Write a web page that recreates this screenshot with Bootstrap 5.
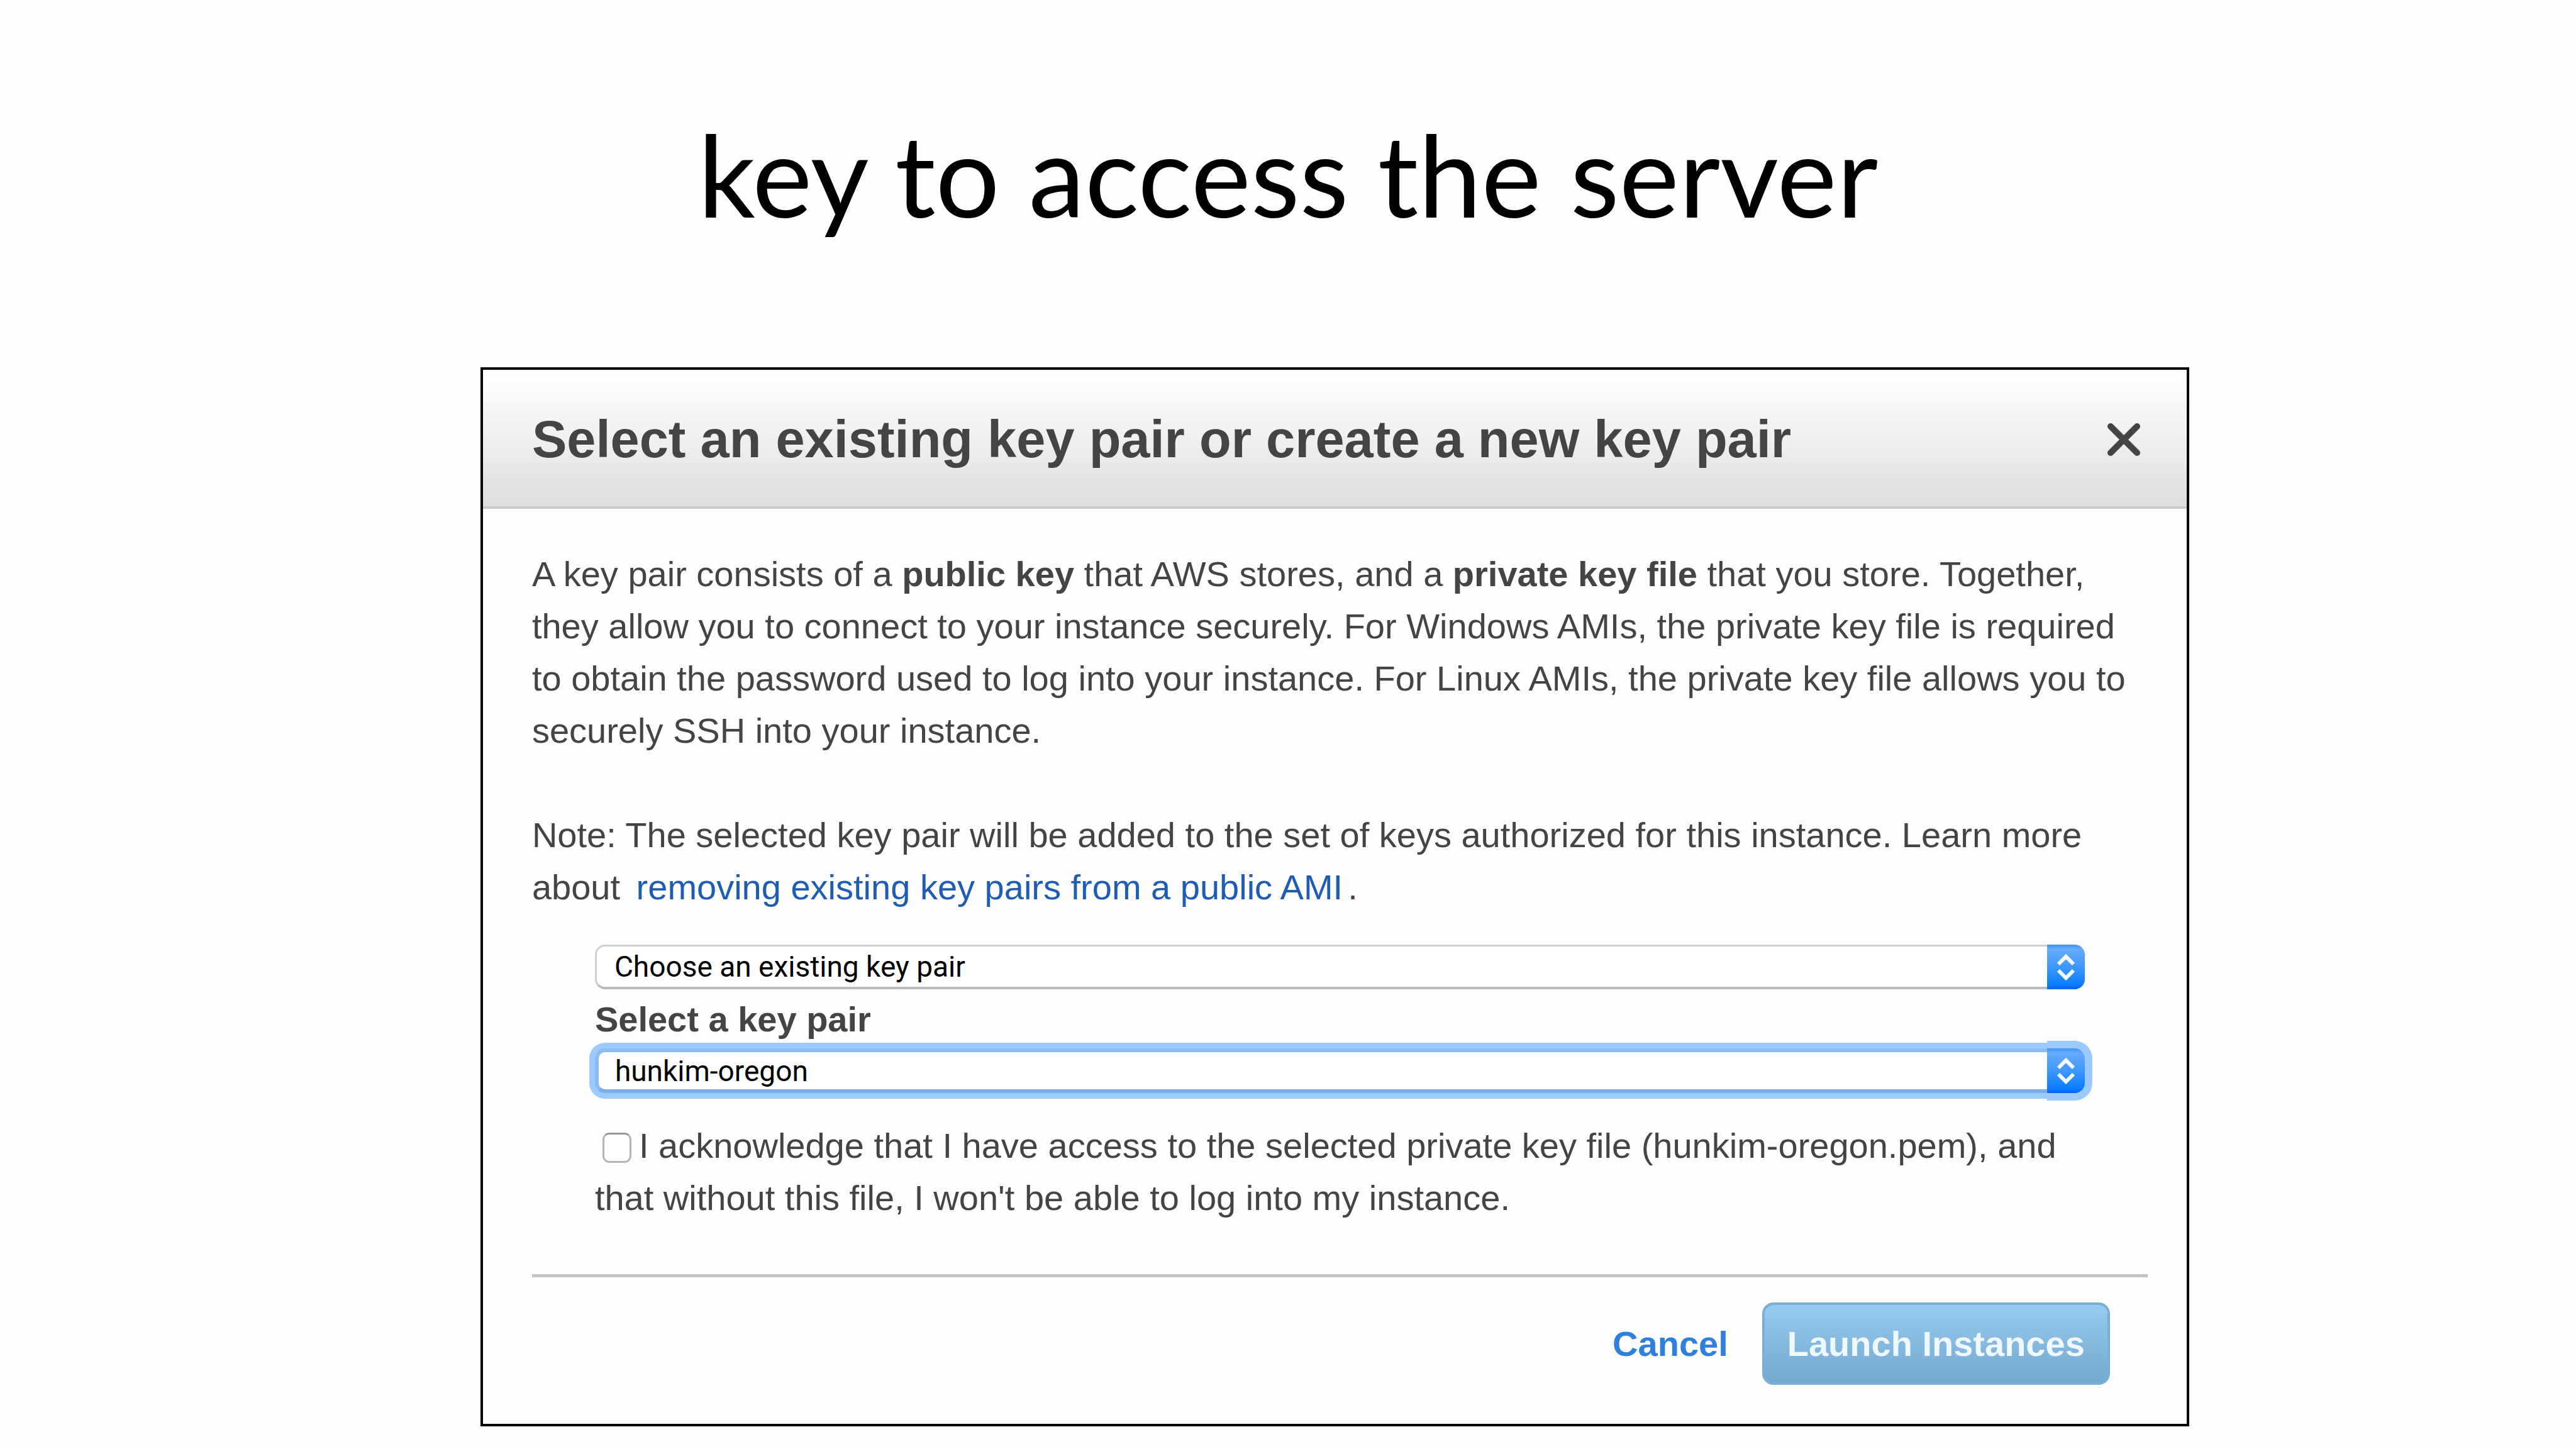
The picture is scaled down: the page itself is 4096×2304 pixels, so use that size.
<!DOCTYPE html>
<html lang="en">
<head>
<meta charset="utf-8">
<meta name="viewport" content="width=device-width, initial-scale=1">
<title>key to access the server</title>
<link href="https://cdn.jsdelivr.net/npm/bootstrap@5.3.0/dist/css/bootstrap.min.css" rel="stylesheet">
<style>
  body { background: #fdfefe; color: #444; font-family: "Liberation Sans", Arial, sans-serif; font-size: 56px; line-height: 83px; }
  .slide-title { font-family: Lato, "Gill Sans", sans-serif; font-size: 180px; line-height: 216px; color: #000; padding-top: 168px; margin-bottom: 200px; }
  .key-dialog { margin-left: 18.65%; margin-right: 15.02%; border: 4px solid #000; background: #fefefe; }
  .key-head { height: 221px; padding: 4px 70px 0 78px; background: linear-gradient(#fff, #f0f0f0 50%, #dedede); border-bottom: 4px solid #ccc; }
  .key-head h2 { font-size: 83px; line-height: 100px; font-weight: 700; color: #444; }
  .close-btn { width: 60px; height: 60px; }
  .close-btn svg, .launch-btn { display: block; }
  .key-body { padding: 62px 62px 62px 78px; }
  .key-body p { margin-bottom: 83px; }
  .key-body p.note { margin-bottom: 50px; }
  .doc-link { color: #1f5cb4; text-decoration: none; margin: 0 8px 0 10px; }
  .key-form { padding: 0 100px; }
  .mac-select { height: 71px; padding: 0 90px 0 28px; font-family: Roboto, sans-serif; font-size: 46px; line-height: 60px; color: #000; background: #fff; border: 3px solid #d0d0d0; border-bottom: 4px solid #bbb; border-radius: 16px; appearance: none; outline: 0; }
  .mac-arrows { width: 60px; height: 71px; border-radius: 0 16px 16px 0; background: linear-gradient(#3c92fb, #66acfb 10%, #3d98fd 50%, #0a7dff 90%, #0560fa); pointer-events: none; }
  .ring .mac-select { padding-left: 26px; border: 6px solid #8dbcf3; border-bottom-color: #7eaee6; box-shadow: 0 0 0 9px #9bcaff; }
  .ring .mac-arrows { box-shadow: 0 0 0 12px #9bcaff; clip-path: inset(-12px -12px -12px 0); }
  .pair-label { line-height: 83px; margin: 6px 0 5px; font-weight: 700; }
  .ack { margin-top: 42px; }
  .ack-box { appearance: none; width: 46px; height: 48px; margin: 0 12px 0 12px; border: 3px solid #b4b4b4; border-top-color: #999; border-radius: 11px; background: #fff; vertical-align: -8px; }
  .key-foot { margin-top: 80px; padding: 40px 60px 0 0; border-top: 5px solid #c4c4c4; gap: 54px; }
  .cancel-btn { color: #2f7fdd; font-weight: 700; }
  .launch-btn { height: 131px; padding: 0 36px; border: 4px solid #7aaed4; border-radius: 18px; color: #eff7ff; font-weight: 700; background: linear-gradient(#98cbf0, #86b9e0 50%, #76a9d0); }
</style>
</head>
<body>
<main>
  <h1 class="slide-title text-center fw-normal">key to access the server</h1>
  <section class="key-dialog" aria-labelledby="dialog-title">
    <header class="key-head d-flex align-items-center justify-content-between">
      <h2 class="m-0" id="dialog-title">Select an existing key pair or create a new key pair</h2>
      <button type="button" class="close-btn border-0 bg-transparent p-0" aria-label="Close">
        <svg width="60" height="60" viewBox="0 0 60 60" fill="none" stroke="#444" stroke-width="10" stroke-linecap="round"><path d="M9 9L51 51M51 9L9 51"/></svg>
      </button>
    </header>
    <div class="key-body">
      <p>A key pair consists of a <strong>public key</strong> that AWS stores, and a <strong>private key file</strong> that you store. Together, they allow you to connect to your instance securely. For Windows AMIs, the private key file is required to obtain the password used to log into your instance. For Linux AMIs, the private key file allows you to securely SSH into your instance.</p>
      <p class="note">Note: The selected key pair will be added to the set of keys authorized for this instance. Learn more about <a class="doc-link" href="#">removing existing key pairs from a public AMI</a>.</p>
      <form class="key-form">
        <div class="position-relative">
          <select class="mac-select d-block w-100" aria-label="Key pair option"><option>Choose an existing key pair</option></select>
          <span class="mac-arrows position-absolute top-0 end-0"><svg class="d-block" width="60" height="71" viewBox="0 0 60 71" fill="none" stroke="#f4f9ff" stroke-width="6"><path d="M18 31L30 19L42 31M18 41L30 53L42 41"/></svg></span>
        </div>
        <label class="pair-label d-block" for="pair">Select a key pair</label>
        <div class="position-relative ring">
          <select class="mac-select d-block w-100" id="pair"><option>hunkim-oregon</option></select>
          <span class="mac-arrows position-absolute top-0 end-0"><svg class="d-block" width="60" height="71" viewBox="0 0 60 71" fill="none" stroke="#f4f9ff" stroke-width="6"><path d="M18 31L30 19L42 31M18 41L30 53L42 41"/></svg></span>
        </div>
        <div class="ack"><input class="ack-box" type="checkbox" id="ack"><label class="d-inline" for="ack">I acknowledge that I have access to the selected private key file (hunkim-oregon.pem), and that without this file, I won't be able to log into my instance.</label></div>
      </form>
      <footer class="key-foot d-flex justify-content-end align-items-center">
        <button type="button" class="cancel-btn border-0 bg-transparent p-0">Cancel</button>
        <button type="button" class="launch-btn">Launch Instances</button>
      </footer>
    </div>
  </section>
</main>
<script src="https://cdn.jsdelivr.net/npm/bootstrap@5.3.0/dist/js/bootstrap.bundle.min.js"></script>
</body>
</html>
